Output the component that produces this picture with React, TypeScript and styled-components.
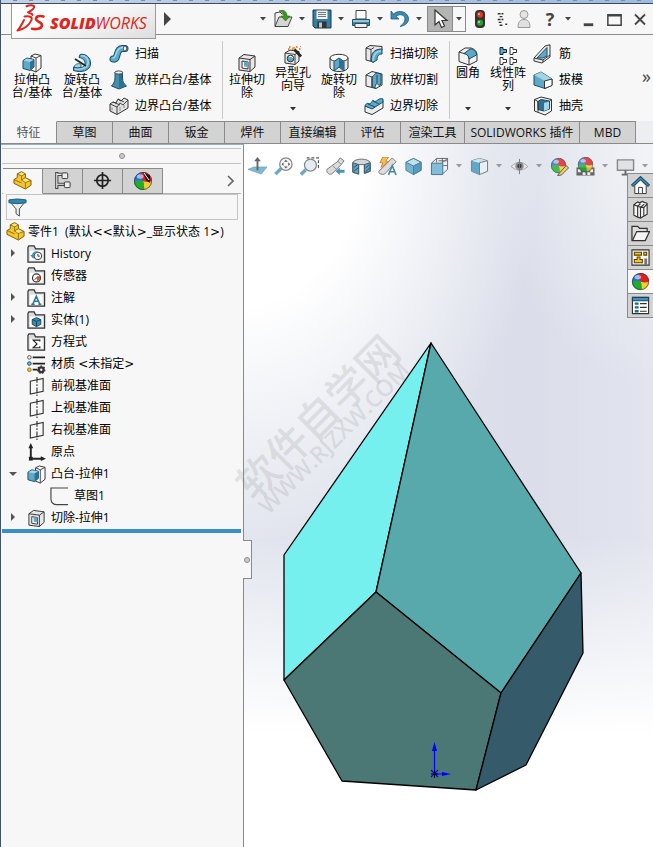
import React from "react";
import styled, { createGlobalStyle, css } from "styled-components";

const GlobalStyle = createGlobalStyle`
  * { box-sizing: border-box; }
  body { margin: 0; background: #f7f7f7; }
  button { font: inherit; color: inherit; background: none; border: 0; padding: 0; margin: 0; cursor: pointer; }
  ul { list-style: none; margin: 0; padding: 0; }
  svg { display: block; flex: none; }
`;

/* ---------- icons ---------- */

const B = "#5fa9c8";
const BL = "#a5d3e6";
const BD = "#2d7294";
const K = "#333";

const Ball = ({ cx = 10, cy = 10, r = 8, soft = false }) => (
  <g opacity={soft ? 0.8 : 1}>
    <g transform={`translate(${cx} ${cy}) scale(${r / 8})`}>
      <circle r="8" fill="#2f6fd8" />
      <path d="M0 0C-1 -3 -2 -6 -1 -7.9A8 8 0 0 1 8 0C5 1.500 2 1 0 0z" fill="#e02020" />
      <path d="M0 0C3 1.500 6 1 8 0A8 8 0 0 1 1 7.900C1 5 1 2 0 0z" fill="#f2cf2c" />
      <path d="M0 0C1 2 1 5 1 7.900A8 8 0 0 1 -8 1C-6 -1 -3 -1 0 0z" fill="#1fae2a" />
      <ellipse cx="-2.500" cy="-4" rx="3" ry="2" fill="#fff" opacity=".55" />
      <circle r="7.600" fill="none" stroke="#333" strokeWidth=".8" opacity=".7" />
    </g>
  </g>
);

const Folder = ({ children }: { children?: React.ReactNode }) => (
  <>
    <path d="M1 18V2.500L2 1H7.500L9 4H18.500V18z" fill="#dcdcdc" stroke={K} strokeWidth="1.300" />
    <path d="M3 6H16.500V16.500H3z" fill="#fdfdfd" />
    {children}
  </>
);

const Part = (
  <>
    <path d="M1 9L4.500 7V3L9 .7L13 3V7L19 10V15L13 19L1 13z" fill="#f5c52c" stroke="#7a5a08" strokeWidth="1" strokeLinejoin="round" />
    <path d="M4.500 3L9 5V9.500L13 12V18.500M9 5L13 3M9 9.500L13 7M13 12L19 10M1 9L9 12.500" fill="none" stroke="#8a670c" strokeWidth=".9" />
    <path d="M6 3L9 1.600L12 3L9 4.500zM10 9.600L13 8L17 10L13 11.500z" fill="#fce68d" />
  </>
);

const Extrude = (
  <>
    <path d="M9 3L13 1L19 2.500V15L14 19L9 17z" fill="#fafafa" stroke={K} />
    <path d="M14 19V5L9 3M14 5L19 2.500" fill="none" stroke={K} strokeWidth=".9" />
    <path d="M1 7.500L5 5L12 6.500V14L8 17.500L1 15.500z" fill={B} stroke="#164f6a" />
    <path d="M1.500 7.500L5 5.500L11.500 6.700L8 9z" fill={BL} />
    <path d="M8 9V17L12 14V6.700z" fill={BD} />
  </>
);

const CutBox = (
  <>
    <path d="M2 5L7 1.500L18 3V14L13 18.500L2 17z" fill="#e8e8e8" stroke={K} />
    <path d="M2 5L13 6.500V18.500M13 6.500L18 3" fill="none" stroke={K} />
    <path d="M5 8L11 9V16L5 15z" fill="#fff" stroke={K} />
    <path d="M7 8.500L11 9V14L7 13.500z" fill={B} />
  </>
);

const Plane = (
  <>
    <path d="M3.500 4.500L17 1.500V15L3.500 18z" fill="none" stroke={K} strokeWidth="1.200" />
    <path d="M10.500 0V20" stroke={K} strokeWidth="1.200" strokeDasharray="6 1.500 2 1.500" />
  </>
);

const ICONS: Record<string, React.ReactNode> = {
  open: (
    <>
      <path d="M2 17V4L7 3L9 5H13V17z" fill="#f0f0f0" stroke="#444" />
      <path d="M2 17.500L6 8H19L15 17.500z" fill="#d5d5d5" stroke="#444" />
      <path d="M6 2C11 0 14 3 14 7H17L12.500 12L8 7H11C11 4 9 3 6 2z" fill="#3b9a1c" stroke="#23650d" strokeWidth=".6" />
    </>
  ),
  save: (
    <>
      <path d="M1 1H19V19H3L1 17z" fill="#357f9f" stroke="#1b3c4c" />
      <path d="M4.500 1.500H15.500V10H4.500z" fill="#f2f2f2" />
      <path d="M6 3.500H14M6 5.500H14M6 7.500H14" stroke="#777" />
      <path d="M5.500 12.500H14.500V19H5.500z" fill="#333" />
      <path d="M7 13.500H10V18.500H7z" fill="#b9c7ce" />
    </>
  ),
  print: (
    <>
      <path d="M5 10V1.500H15V10z" fill="#fff" stroke="#444" />
      <path d="M1.500 10.500H18.500V16.500H1.500z" fill="#378cb1" stroke="#1d536c" />
      <path d="M2 11H18V13H2z" fill="#8ec8df" />
      <path d="M4 14.500H16V18.500H4z" fill="#eee" stroke="#444" />
    </>
  ),
  undo: (
    <path d="M1 2L1 10L9 10L6 7.500C10 4 15 6 15 10C15 13 13 15 10 17.500C16 16.500 19 13 18.500 9C17.500 3 9 0 3.500 5z" fill="#3c8bb0" stroke="#1d5f80" strokeWidth=".8" />
  ),
  cursor: (
    <path d="M5 1V16L9 12.500L11.500 18.500L14.500 17L12 11.500H17z" fill="#fff" stroke="#333" strokeWidth="1.200" />
  ),
  traffic: (
    <>
      <rect x="5" y="1" width="10" height="18" rx="4" fill="#333" />
      <circle cx="10" cy="5.800" r="3" fill="#e23a20" />
      <circle cx="10" cy="13.800" r="3" fill="#2ba32f" />
      <circle cx="9" cy="5" r="1" fill="#ffb09f" />
      <circle cx="9" cy="13" r="1" fill="#a5f0a0" />
    </>
  ),
  options: (
    <path d="M6 4H12M8 7H11M6 10H12M7 13H11M8 16H11M14 15H16" stroke="#333" strokeWidth="1.500" strokeDasharray="3 1" />
  ),
  user: (
    <>
      <circle cx="10" cy="5.500" r="4" fill="#e4e4e4" stroke="#999" />
      <path d="M4 18.500C4 13 6 10.500 10 10.500S16 13 16 18.500z" fill="#e0e0e0" stroke="#999" />
    </>
  ),
  min: <path d="M5 15.500H15" stroke="#444" strokeWidth="3" />,
  max: <path d="M3 5V16H17V5zM3 6H17" fill="none" stroke="#444" strokeWidth="1.600" />,
  close: <path d="M5 5.500L15 15.500M15 5.500L5 15.500" stroke="#444" strokeWidth="1.800" />,
  extrude: Extrude,
  revolve: (
    <>
      <path d="M8 1.500C14 0 19 5 18.500 11C18 18 9 20 1.500 17.500V14C7 15.500 12 15 13 11C13.500 8 11 5 7 4.500z" fill={B} stroke="#164f6a" />
      <path d="M9 3C13 2 17 6 16 10.500C15 15 9 17 3 16" fill="none" stroke={BL} strokeWidth="1.600" />
      <path d="M3 6L14 13" stroke="#222" strokeWidth="1.800" />
      <path d="M2 14C3 11 6 10 9 11L9 14C7 15 4 15 2 14z" fill={BL} stroke="#164f6a" strokeWidth=".8" />
    </>
  ),
  sweep: (
    <>
      <path d="M4 15C10 17 6 5 13 4.500H16" fill="none" stroke="#164f6a" strokeWidth="7" strokeLinecap="round" />
      <path d="M4 15C10 17 6 5 13 4.500H16" fill="none" stroke={B} strokeWidth="5" strokeLinecap="round" />
      <path d="M4 14C8 14 6 4.500 13 3.500H15" fill="none" stroke={BL} strokeWidth="1.500" strokeLinecap="round" />
      <ellipse cx="16" cy="4.500" rx="1.600" ry="2.600" fill="#f4f4f4" stroke="#333" strokeWidth=".8" />
    </>
  ),
  loft: (
    <>
      <path d="M6 2V8C6 12 4 14 2.500 16L10 19L17.500 16C15 14 13.500 12 13.500 8V2z" fill="#4a8dab" stroke="#164f6a" />
      <path d="M10 4V18L17 15.800C15 14 13 12 13 8V3z" fill={BD} />
      <ellipse cx="9.800" cy="2.500" rx="3.800" ry="1.600" fill="#eee" stroke="#333" strokeWidth=".8" />
    </>
  ),
  boundary: (
    <>
      <path d="M1 8L4 6L7 7L9 3L12 5L15 2L19 4V12L8 18.500L1 15z" fill="#e3e3e3" stroke={K} strokeLinejoin="round" />
      <path d="M1 8L8 11V18M8 11L11 7L14 9L19 4M4 6L11 9M9 3L15 6" fill="none" stroke={K} strokeWidth=".9" />
      <path d="M3 11.500V14.500M11 11V15M15 9V12" stroke="#888" />
    </>
  ),
  cut: CutBox,
  hole: (
    <>
      <path d="M2 7L7 4L16 5.500V15L12 18.500L2 17z" fill="#e8e8e8" stroke={K} />
      <path d="M2 7L12 8.500V18.500M12 8.500L16 5.500" fill="none" stroke={K} strokeWidth=".9" />
      <circle cx="7.500" cy="12.500" r="3.300" fill={B} stroke={K} />
      <path d="M6 11A2.500 2.500 0 0 1 10 12" stroke="#fff" fill="none" />
      <path d="M10 2L18 10.500" stroke="#222" strokeWidth="2.600" />
      <path d="M9.500 1.500L11.500 3.500" stroke="#f4a91c" strokeWidth="2.600" />
      <path d="M6 1h1.500M13 1h1.500M16 3h1.500M5 3h1.500M17 0h1" stroke="#e0602a" strokeWidth="1.500" />
    </>
  ),
  cutRevolve: (
    <>
      <path d="M1 5V15C3 18 7 18.500 10 18.500S17 18 19 15V5z" fill="#e6e6e6" stroke={K} />
      <ellipse cx="10" cy="5" rx="9" ry="3.700" fill="#fafafa" stroke={K} />
      <path d="M5 8.500L10 5L15 8.500V18L10 14L5 18z" fill={B} stroke="#164f6a" />
      <path d="M10 5L15 8.500V18L10 14z" fill={BD} />
    </>
  ),
  cutSweep: (
    <>
      <path d="M2 4L6 1.500L18 2.500V6C11 6 10 12 9.500 18L2 16z" fill="#e8e8e8" stroke={K} />
      <path d="M7 17C7 9 10 5 18 5V10C14 10 13 13 13 16L9 18.500z" fill={B} stroke="#164f6a" />
      <path d="M9 17C9 10 13 7 17 7" fill="none" stroke={BL} strokeWidth="1.500" />
      <path d="M2 4L7 5.500V17M7 5.500L10 3.500" fill="none" stroke={K} strokeWidth=".9" />
    </>
  ),
  cutLoft: (
    <>
      <path d="M2 5L8 1.500L18 4V15L12 18.500L2 16z" fill="#ececec" stroke={K} />
      <path d="M8 7C11 5 11 3 13 3L17 4V14L15 15.500C13 12 11 14 11 18L8 17z" fill={B} stroke="#164f6a" />
      <path d="M2 5L8 7V17M13 5V13" fill="none" stroke={K} strokeWidth=".9" />
    </>
  ),
  cutBoundary: (
    <>
      <path d="M1 10L8 12L19 5V12L8 18.500L1 16z" fill="#eee" stroke={K} />
      <path d="M1 10C3 5 5 9 7 7S8 3 10 5S15 1 19 3V6L8 13z" fill={B} stroke="#164f6a" />
      <path d="M4 8L11 11M9 5L15 8" stroke="#164f6a" />
    </>
  ),
  fillet: (
    <>
      <path d="M1 6L7 2L13 2C17 3 19 6 19 9V15L11 19L1 15.500z" fill="#f2f2f2" stroke={K} />
      <path d="M1 6L6 7.500C10 8 11 11 11 13V19" fill="none" stroke={K} />
      <path d="M6 7.500L12 3C16 3 18.500 6 18.500 9L11 13C11 10 9 8 6 7.500z" fill={B} stroke="#164f6a" />
    </>
  ),
  pattern: (
    <>
      <path d="M2 1.500H5V3.500H8.500V6.500H5V8.500H2z" fill={B} stroke="#123" />
      <path d="M12 1.500H15V3.500H18.500V6.500H15V8.500H12zM2 11.500H5V13.500H8.500V16.500H5V18.500H2zM12 11.500H15V13.500H18.500V16.500H15V18.500H12z" fill="#fff" stroke="#333" />
    </>
  ),
  rib: (
    <>
      <path d="M1 14L12 2L17 .8V13L9 19L1 17z" fill="#eee" stroke={K} />
      <path d="M4 14L14 3.500V12L10 14z" fill={B} stroke="#164f6a" />
      <path d="M1 14L10 16L17 11M10 16V18" fill="none" stroke={K} />
    </>
  ),
  draft: (
    <>
      <path d="M1 5L8 2L19 9V15L12 18.500L1 15z" fill={B} stroke="#164f6a" />
      <path d="M1 5L8 2L19 9L12 11z" fill={BL} />
      <path d="M11.500 11L19 9V15.500L11.500 18.500z" fill="#fff" stroke={K} />
    </>
  ),
  shell: (
    <>
      <path d="M1.500 3.500L8 1L18.500 3.500V15L12 19L1.500 15z" fill="#f2f2f2" stroke={K} />
      <path d="M5 5.500L8 3.500L16.500 5V13L11 15L5 13.500z" fill={BD} stroke="#164f6a" />
      <path d="M11 7L16 5.500V13L11 15z" fill={BL} />
      <path d="M1.500 3.500L5 5.500V15.800M18.500 3.500L16.500 5" fill="none" stroke={K} />
    </>
  ),
  part: Part,
  config: (
    <>
      <path d="M4 1V19M4 3.500H10M4 14H12" fill="none" stroke="#444" strokeWidth="3.400" />
      <path d="M4 2V18M4 3.500H10M4 14H12" fill="none" stroke="#eee" strokeWidth="1.200" />
      <rect x="9.500" y="2" width="6" height="6" rx="1" fill="#eee" stroke="#333" />
      <rect x="12" y="11.500" width="6" height="6" rx="1" fill="#eee" stroke="#333" />
    </>
  ),
  target: (
    <>
      <circle cx="10" cy="10" r="6" fill="none" stroke="#222" strokeWidth="1.800" />
      <path d="M10 1V19M1 10H19" stroke="#222" strokeWidth="1.800" />
    </>
  ),
  ball: <Ball r={9} />,
  display: (
    <>
      <Ball r={9} />
      <path d="M10 1.500L17 4.500V12L13 9z" fill="#201010" />
      <path d="M11 2L16 9" stroke="#fff" strokeWidth="1" />
    </>
  ),
  filter: (
    <>
      <path d="M2 4H18L12 11.500V19L8.500 16.500V11.500z" fill="#eee" stroke="#444" />
      <path d="M1 2Q10 0 19 2V5Q10 7 1 5z" fill="#2e88ad" stroke="#1a5e7c" />
    </>
  ),
  history: (
    <Folder>
      <circle cx="11.500" cy="11.500" r="4" fill="#fff" stroke="#333" />
      <path d="M11.500 9.500V11.800H13.500" fill="none" stroke="#333" />
      <path d="M3.500 10.500H9L6.500 14.500z" fill="#3b89ad" />
      <path d="M6 11.500C6 8 9 7 11 7.500" fill="none" stroke="#3b89ad" strokeWidth="1.600" />
    </Folder>
  ),
  sensor: (
    <Folder>
      <circle cx="10" cy="11.500" r="4.200" fill="#fff" stroke="#333" strokeWidth="1.300" />
      <path d="M10 11.500L14 9V13L11 15z" fill="#e4502e" />
      <path d="M8 13.500L12 9.500" stroke="#333" />
    </Folder>
  ),
  note: (
    <Folder>
      <path d="M6 16L9.800 7.500L13.500 16M7.500 13H12M4.500 16H8M12 16H15" fill="none" stroke="#2a7a9e" strokeWidth="1.600" />
    </Folder>
  ),
  solid: (
    <Folder>
      <path d="M5.500 9L10 7L14.500 9V14L10 16.500L5.500 14z" fill="#388bb0" stroke="#15465c" />
      <path d="M5.500 9L10 11L14.500 9M10 11V16" fill="none" stroke="#15465c" />
    </Folder>
  ),
  equation: (
    <Folder>
      <path d="M13.500 9V7.500H6.500L10.500 11.500L6.500 15.500H13.500V14" fill="none" stroke="#222" strokeWidth="1.200" />
    </Folder>
  ),
  material: (
    <>
      <path d="M6 2.500H19M6 9H19M6 15.500H11" stroke="#222" strokeWidth="1.800" />
      <circle cx="2.500" cy="2.500" r="1.900" fill="#eee" stroke="#555" />
      <circle cx="2.500" cy="9" r="1.900" fill="#5cc0e8" stroke="#246" />
      <circle cx="2.500" cy="15.500" r="1.900" fill="#f7c600" stroke="#963" />
      <circle cx="15" cy="15.500" r="2.500" fill="none" stroke="#333" strokeWidth="2.500" />
      <circle cx="15" cy="15.500" r="3.900" fill="none" stroke="#333" strokeWidth="1.200" strokeDasharray="1.700 1.700" />
    </>
  ),
  plane: Plane,
  origin: (
    <>
      <path d="M4 4V16.500H16" fill="none" stroke="#222" strokeWidth="2" />
      <path d="M1.500 5.500L4 0L6.500 5.500zM14.500 14L20 16.500L14.500 19z" fill="#222" />
      <rect x="2" y="14.500" width="4" height="4" fill="#222" />
    </>
  ),
  sketch: <path d="M19 1H1V13C1 16.500 4 18.500 7 18.500H19" fill="none" stroke="#444" strokeWidth="1.200" />,
  normal: (
    <>
      <path d="M0 13L6 10.500H20L14 18z" fill="#7fb9d4" stroke="#5f94ad" strokeWidth=".6" />
      <path d="M10 14V3" stroke="#666" strokeWidth="2" />
      <path d="M6.500 4.500L10 0L13.500 4.500z" fill="#666" />
    </>
  ),
  zoomFit: (
    <>
      <path d="M1.500 18L8 11.500" stroke="#6fa8c4" strokeWidth="3.600" />
      <circle cx="12.500" cy="7.500" r="6.500" fill="#f4f6f8" stroke="#888" strokeWidth="1.300" />
      <path d="M10.500 5L12.500 3L14.500 5zM10.500 10L12.500 12L14.500 10zM10 5.500L8 7.500L10 9.500zM15 5.500L17 7.500L15 9.500z" fill="#555" />
    </>
  ),
  zoomArea: (
    <>
      <path d="M7 1H19.500V13" fill="none" stroke="#555" strokeWidth="1.300" strokeDasharray="3 2" />
      <path d="M1 18.500L6 13.500" stroke="#6fa8c4" strokeWidth="3.600" />
      <circle cx="11" cy="8.500" r="6.300" fill="#e3e9ef" fillOpacity=".9" stroke="#888" strokeWidth="1.300" />
    </>
  ),
  prevView: (
    <>
      <path d="M1 13L12 5L15 1L19 4L16 8L6 18C3 19 0 16 1 13z" fill="#dcdcdc" stroke="#777" />
      <path d="M7 9L11 13M12 4L16 8" stroke="#888" />
      <path d="M10 15L14.500 11V13.500H19.500V16.500H14.500V19z" fill="#4c93b5" />
    </>
  ),
  section: (
    <>
      <path d="M.7 6C3 1 17 1 19.300 6V15L13 17.500V8H7V18L.7 16z" fill="#d4d7da" stroke="#666" />
      <path d="M1 6L7 8V18L1 16zM13 8L19 6V15L13 17z" fill="#62a3c2" stroke="#3a5f70" />
      <path d="M2 11L6 8M2 15L7 11M14 12L18 8M14 16L19 11" stroke="#244f63" />
    </>
  ),
  dynView: (
    <>
      <path d="M1 15L10 6L15 1L19 5L7 18C3 19 0 17 1 15z" fill="#dcdcdc" stroke="#777" />
      <path d="M5 0H11L8 5H11L3 11L5 6H2z" fill="#f6c14d" stroke="#c8702c" strokeWidth=".8" />
      <path d="M11 19L15 9L19 19M12.500 15.500H17.500" fill="none" stroke="#4286a8" strokeWidth="1.700" />
    </>
  ),
  cube: (
    <>
      <path d="M10 1.500L18 5.500V14L10 18.500L2 14V5.500z" fill="#76b5d0" stroke="#4d8299" />
      <path d="M2 5.500L10 1.500L18 5.500L10 9.500z" fill="#c0e0ee" stroke="#4d8299" />
      <path d="M10 9.500L18 5.500V14L10 18.500z" fill="#579cba" stroke="#4d8299" />
    </>
  ),
  orient: (
    <>
      <path d="M7 1.500H18.500V13L13 18H2V6zM7 1.500V6M18.500 1.500L13 6M13 1V13M9 4H18M14 9H18" fill="none" stroke="#666" />
      <path d="M1.500 6.500H13.500V18.500H1.500z" fill="#86bdd6" stroke="#3f7a95" />
    </>
  ),
  style: (
    <>
      <path d="M1.500 4L10 1.500L18.500 4V15L10 18.500L1.500 15z" fill="#eceff2" stroke="#777" />
      <path d="M2 4L10 6V18.500L2 15z" fill="#62a7c6" />
      <path d="M10 1.500L18 4L10 6L2 4z" fill="#cbe3ee" />
      <path d="M10 6V18.500M10 6L18 4" stroke="#777" />
    </>
  ),
  eye: (
    <>
      <path d="M1 10Q10 1 19 10Q10 18 1 10z" fill="#e8e8ec" stroke="#a8a8ac" />
      <circle cx="10" cy="9.500" r="4.500" fill="#8d8f94" />
      <circle cx="10" cy="9.500" r="2.300" fill="#3a3a3e" />
      <path d="M10 2V18" stroke="#777" />
    </>
  ),
  appearance: (
    <>
      <Ball cx={9} cy={9} soft />
      <path d="M9 18L17 9L19.500 11.500L12 19L8 19.500z" fill="#f3cf69" stroke="#555" />
    </>
  ),
  scene: (
    <>
      <path d="M.5 11H19.500V19.500H.5z" fill="#666" />
      <path d="M2 13h3v3H2zM7 16h3v3H7zM15 13h3v3h-3zM12 16h3v3h-3z" fill="#eee" />
      <Ball cx={10} cy={8} soft />
    </>
  ),
  monitor: (
    <>
      <path d="M1.500 3H18.500V14H1.500z" fill="#e0e2e6" stroke="#888" strokeWidth="1.500" />
      <path d="M10 14V18M6 18.500H14" stroke="#666" strokeWidth="2" />
    </>
  ),
  home: (
    <>
      <path d="M4 10L10 4L16 10V18.500H4z" fill="#fff" stroke={K} />
      <path d="M8 18V12H12V18" fill="#fff" stroke={K} />
      <path d="M1 10.500L10 2L19 10.500" fill="none" stroke="#15425a" strokeWidth="3.200" />
      <path d="M1.500 10L10 2.300L18.500 10" fill="none" stroke="#3f93ba" strokeWidth="1.300" />
    </>
  ),
  books: (
    <path d="M3 5L7 2L9 3L12 1.500L14 2.500L17 3.500V15L10 19L7 18L3 16zM3 5L7 6.500V18M7 6.500L10 4M7 6.500L10 7.500V19M10 7.500L14 4.500M10 7.500L13.500 8V17M13.500 8L17 4" fill="#f5f5f5" stroke={K} strokeWidth="1.200" />
  ),
  explorer: (
    <>
      <path d="M1 17.500V2.500H7L9 4.500H17V8" fill="#ddd" stroke={K} strokeWidth="1.300" />
      <path d="M1.500 17.500L6 8H19.500L15 17.500z" fill="#f5f5f5" stroke={K} strokeWidth="1.300" />
    </>
  ),
  palette: (
    <>
      <path d="M1 2H19V18H1z" fill="#f8f8f8" stroke={K} strokeWidth="1.200" />
      <path d="M3.500 4.500H11V7.500H3.500zM13.500 4.500H16.500V7.500H13.500zM6.500 9.500H9.500V12H12V15.500H3.500V12H6.500z" fill="#f7c520" stroke="#5a4300" strokeWidth="1.100" />
      <path d="M15.500 11V18" stroke="#777" strokeWidth="3" />
    </>
  ),
  props: (
    <>
      <path d="M1.500 1.500H18.500V18.500H1.500z" fill="#fff" stroke={K} strokeWidth="1.200" />
      <path d="M1.500 1.500H18.500V5H1.500z" fill="#3f93ba" stroke="#173f52" />
      <path d="M4 8H8M4 12H8M4 16H8" stroke="#1d6a90" strokeWidth="2.500" />
      <path d="M9.500 8H16.500M9.500 12H16.500M9.500 16H16.500" stroke="#333" strokeWidth="1.200" />
    </>
  ),
};

const Icon = ({ name, size = 19 }: { name: string; size?: number }) => (
  <svg width={size} height={size} viewBox="0 0 20 20" aria-hidden="true">
    {ICONS[name]}
  </svg>
);

const Caret = () => (
  <svg width="6" height="4" viewBox="0 0 6 4" aria-hidden="true">
    <path d="M0 0H6L3 3.500z" fill="currentColor" />
  </svg>
);

/* ---------- shell ---------- */

const Shell = styled.div`
  display: flex;
  flex-direction: column;
  min-height: 100vh;
  border-left: 1px solid #43536b;
  background: #f7f7f7;
  color: #000;
  font: 12px/16px "Open Sans", "Noto Sans CJK SC", sans-serif;
`;

const WindowEdge = styled.div`
  height: 4px;
  background:
    repeating-linear-gradient(90deg, transparent 0 12px, #7c8ca6 12px 16px) 0 0 / 100% 1px no-repeat,
    linear-gradient(90deg, #c3d3e6, #9ebbe0);
  border-bottom: 1px solid #40485a;
`;

const TitleBar = styled.header`
  display: flex;
  align-items: center;
  height: 31px;
  padding-left: 10px;
  border-bottom: 1px solid #8b8b8b;
`;

const Brand = styled.div`
  display: flex;
  align-items: flex-start;
  align-self: flex-start;
  gap: 4px;
  width: 145px;
  height: 35px;
  padding: 0 4px;
  border: 1px solid #9a9a9a;
  border-top: 0;
  background: linear-gradient(160deg, #fff 30%, #dedede);
  color: #d8281f;
  font: italic 400 16px/20px "Open Sans", sans-serif;
  z-index: 1;
`;

const BrandName = styled.span`
  padding-top: 9px;
`;

const BrandBold = styled.b`
  font-weight: 800;
`;

const MenuArrow = styled.button`
  margin-left: 8px;
`;

const QuickBar = styled.div`
  display: flex;
  align-items: center;
  margin-left: auto;
  color: #444;
`;

const Slot = styled.button<{ $w: number }>`
  display: flex;
  flex: none;
  align-items: center;
  justify-content: center;
  width: ${(p) => p.$w}px;
  height: 26px;
`;

const SelectTool = styled.div`
  display: flex;
  align-items: center;
  margin: 0 2px;
  border: 1px solid #8a8a8a;

  > button {
    height: 24px;
  }

  > button:first-child {
    background: #b4b4b4;
    border-right: 1px solid #8a8a8a;
  }
`;

const Help = styled.span`
  font: 700 18px/20px "Open Sans", sans-serif;
`;

/* ---------- ribbon ---------- */

const Ribbon = styled.div`
  display: flex;
  height: 86px;
  padding: 6px 2px 2px 6px;
`;

const Divider = styled.div`
  width: 1px;
  margin-right: 1px;
  background: #c8c8c8;
`;

const BigTool = styled.button<{ $w: number; $high?: boolean }>`
  display: flex;
  flex: none;
  flex-direction: column;
  align-items: center;
  width: ${(p) => p.$w}px;
  padding-top: ${(p) => (p.$high ? 5 : 12)}px;
  line-height: 13px;
  text-align: center;

  > span { white-space: pre-line; }
  > i { display: flex; margin-top: auto; padding-bottom: 8px; color: #333; }
`;

const ToolList = styled.div<{ $w: number }>`
  display: flex;
  flex: none;
  flex-direction: column;
  width: ${(p) => p.$w}px;
  padding-left: 2px;
`;

const SmallTool = styled.button`
  display: flex;
  align-items: center;
  gap: 6px;
  height: 26px;
  white-space: nowrap;
`;

const More = styled.button`
  margin-left: auto;
  padding-bottom: 8px;
  font-size: 18px;
  color: #444;
`;

const Tabs = styled.nav`
  display: flex;
  height: 23px;
  background: #eceef2;
  border-bottom: 1px solid #8a8a8a;
`;

const Tab = styled.button<{ $w: number; $on?: boolean }>`
  flex: none;
  width: ${(p) => p.$w}px;
  border: solid #8a8a8a;
  border-width: 1px 1px 0 0;
  background: #d3d3d3;
  color: #111;
  ${(p) =>
    p.$on &&
    css`
      border-top-color: #f7f7f7;
      background: #f7f7f7;
      color: #555;
    `}
`;

/* ---------- feature manager ---------- */

const Body = styled.main`
  display: flex;
  flex: 1;
`;

const Side = styled.aside`
  position: relative;
  flex: none;
  width: 243px;
  padding: 0 2px 0 1px;
  border-right: 1px solid #8a8a8a;
  border-top: 1px solid #8fb4bc;
`;

const Grip = styled.div`
  display: flex;
  align-items: center;
  justify-content: center;
  height: 16px;
  margin-top: 3px;
  border: solid #c4c4c4;
  border-width: 1px 0;
`;

const Dot = styled.span`
  width: 6px;
  height: 6px;
  border: 1px solid #8c8c8c;
  border-radius: 50%;
  background: #ccc;
`;

const PanelTabs = styled.div`
  display: flex;
  align-items: center;
  height: 26px;
  margin-top: 4px;
  padding-left: 1px;
  border-bottom: 1px solid #b4b4b4;
`;

const PanelTab = styled.button<{ $on?: boolean }>`
  display: flex;
  align-items: center;
  justify-content: center;
  width: 40px;
  height: 26px;
  border: 1px solid #8a8a8a;
  border-left: 0;
  background: #d3d3d3;
  ${(p) =>
    p.$on &&
    css`
      background: #f7f7f7;
      border-bottom-color: #f7f7f7;
    `}
`;

const PanelMore = styled.button`
  margin: 0 7px 0 auto;
  color: #666;
`;

const FilterBox = styled.label`
  display: flex;
  align-items: center;
  height: 26px;
  margin: 0 3px 0 4px;
  padding-left: 1px;
  border: 1px solid #c4c4c4;

  input {
    flex: 1;
    min-width: 0;
    border: 0;
    outline: 0;
    background: none;
    font: inherit;
  }
`;

const Root = styled.div`
  display: flex;
  align-items: center;
  gap: 3px;
  height: 23px;
  padding-left: 4px;
  white-space: pre;
`;

const TreeRow = styled.li<{ $child?: boolean }>`
  display: flex;
  align-items: center;
  height: 22px;
  gap: 5px;
  padding-left: ${(p) => (p.$child ? 25 : 2)}px;
  white-space: pre;
`;

const Toggle = styled.button`
  display: flex;
  justify-content: center;
  width: 18px;
  height: 10px;
  color: #555;
`;

const Angle = styled.span`
  font-family: "DejaVu Sans", sans-serif;
`;

const Rollback = styled.div`
  height: 4px;
  background: #3a8fc8;
`;

const SideHandle = styled.button`
  position: absolute;
  top: 395px;
  right: -9px;
  z-index: 2;
  display: flex;
  align-items: center;
  justify-content: center;
  width: 9px;
  height: 39px;
  border: 1px solid #8a8a8a;
  border-left: 0;
  background: #f7f7f7;
`;

/* ---------- graphics area ---------- */

const Viewport = styled.section`
  position: relative;
  flex: 1;
  min-width: 0;
  background:
    linear-gradient(180deg, rgba(255, 255, 255, 0) 56%, #fff 84%),
    radial-gradient(ellipse 300px 400px at 0 0, #fff 40%, rgba(255, 255, 255, 0) 100%),
    radial-gradient(ellipse 160px 240px at 100% 0, rgba(244, 245, 248, 0.9), rgba(244, 245, 248, 0) 100%),
    linear-gradient(90deg, #e2e5ee, #dbdeea 70%, #e2e5ee);
`;

const Scene = styled.svg`
  position: absolute;
  inset: 0;
  width: 100%;
  height: 100%;
  overflow: visible;
`;

const HeadsUp = styled.div`
  position: relative;
  display: flex;
  align-items: center;
  height: 26px;
  margin-top: 9px;
  overflow: hidden;
  color: #999;
`;

const TaskPane = styled.div`
  position: absolute;
  top: 29px;
  right: 0;
  display: flex;
  flex-direction: column;
  width: 26px;
  border: 1px solid #8a8a8a;
  border-width: 1px 0 0 1px;
`;

const TaskButton = styled.button<{ $on?: boolean }>`
  display: flex;
  align-items: center;
  justify-content: center;
  height: 24px;
  border-bottom: 1px solid #8a8a8a;
  background: ${(p) => (p.$on ? "#f7f7f7" : "#d3d3d3")};
`;

/* ---------- data ---------- */

const tabs: [string, number][] = [
  ["特征", 56], ["草图", 56], ["曲面", 56], ["钣金", 56], ["焊件", 56], ["直接编辑", 64],
  ["评估", 56], ["渲染工具", 64], ["SOLIDWORKS 插件", 115], ["MBD", 56],
];

const tree: { icon: string; text: string; state?: "open" | "closed"; child?: boolean }[] = [
  { icon: "history", text: "History", state: "closed" },
  { icon: "sensor", text: "传感器" },
  { icon: "note", text: "注解", state: "closed" },
  { icon: "solid", text: "实体(1)", state: "closed" },
  { icon: "equation", text: "方程式" },
  { icon: "material", text: "材质 <未指定>" },
  { icon: "plane", text: "前视基准面" },
  { icon: "plane", text: "上视基准面" },
  { icon: "plane", text: "右视基准面" },
  { icon: "origin", text: "原点" },
  { icon: "extrude", text: "凸台-拉伸1", state: "open" },
  { icon: "sketch", text: "草图1", child: true },
  { icon: "cut", text: "切除-拉伸1", state: "closed" },
];

const headsUp = [
  "normal", "zoomFit", "zoomArea", "prevView", "section", "dynView", "cube", "orient", "",
  "style", "", "eye", "", "appearance", "scene", "", "monitor", "",
];

const taskPane = ["home", "books", "explorer", "palette", "ball", "props"];

/* ---------- pieces ---------- */

const Big = ({ icon, text, w, menu, high }: { icon: string; text: string; w: number; menu?: boolean; high?: boolean }) => (
  <BigTool $w={w} $high={high}>
    <Icon name={icon} size={20} />
    <span>{text}</span>
    {menu && <i><Caret /></i>}
  </BigTool>
);

const List = ({ w, items }: { w: number; items: [string, string][] }) => (
  <ToolList $w={w}>
    {items.map(([icon, text]) => (
      <SmallTool key={icon}>
        <Icon name={icon} size={20} />
        {text}
      </SmallTool>
    ))}
  </ToolList>
);

const Label = ({ text }: { text: string }) => (
  <span>
    {text.split(/([<>]+)/).map((part, i) => (i % 2 ? <Angle key={i}>{part}</Angle> : part))}
  </span>
);

const DropSlot = () => (
  <Slot $w={12} aria-label="更多选项"><Caret /></Slot>
);

export default function App() {
  return (
    <Shell>
      <GlobalStyle />
      <WindowEdge />
      <TitleBar>
        <Brand>
          <svg width="30" height="30" viewBox="0 0 30 30" aria-hidden="true">
            <g fill="none" stroke="#d8281f" strokeWidth="2" strokeLinecap="round" strokeLinejoin="round">
              <path d="M10.500 2.200C13 1.200 18 .8 18.200 2.600C18.400 4.500 15 6.800 12 8.400C14 8.600 16 9.500 16.500 11" />
              <path d="M8.500 12.500C14 11.500 16.500 13 15.500 16C13.500 21 8 25.500 1.500 26.500C4 24 6 20 8 16" />
              <path d="M27.500 12.500C23.500 11.500 20 12 20 15C20 18 26.500 18 26 21.500C25.500 25 20 25.500 16 24.800" strokeWidth="2.600" />
            </g>
          </svg>
          <BrandName><BrandBold>SOLID</BrandBold>WORKS</BrandName>
        </Brand>
        <MenuArrow aria-label="菜单">
          <svg width="7" height="14" viewBox="0 0 7 14"><path d="M0 0L7 7L0 14z" fill="#444" /></svg>
        </MenuArrow>
        <QuickBar>
          <DropSlot />
          {["open", "save", "print", "undo"].map((n) => (
            <React.Fragment key={n}>
              <Slot $w={27} aria-label={n}><Icon name={n} size={20} /></Slot>
              <DropSlot />
            </React.Fragment>
          ))}
          <SelectTool>
            <Slot $w={25} aria-label="select"><Icon name="cursor" size={20} /></Slot>
            <Slot $w={12} aria-label="select options"><Caret /></Slot>
          </SelectTool>
          <Slot $w={24} aria-label="rebuild"><Icon name="traffic" size={20} /></Slot>
          <Slot $w={18} aria-label="options"><Icon name="options" /></Slot>
          <Slot $w={28} aria-label="user"><Icon name="user" size={20} /></Slot>
          <Slot $w={24} aria-label="help"><Help>?</Help></Slot>
          <DropSlot />
          <Slot $w={28} aria-label="minimize"><Icon name="min" /></Slot>
          <Slot $w={25} aria-label="maximize"><Icon name="max" /></Slot>
          <Slot $w={26} aria-label="close"><Icon name="close" size={20} /></Slot>
        </QuickBar>
      </TitleBar>

      <Ribbon>
        <Big icon="extrude" text={"拉伸凸\n台/基体"} w={50} />
        <Big icon="revolve" text={"旋转凸\n台/基体"} w={50} />
        <List w={115} items={[["sweep", "扫描"], ["loft", "放样凸台/基体"], ["boundary", "边界凸台/基体"]]} />
        <Divider />
        <Big icon="cut" text={"拉伸切\n除"} w={46} />
        <Big icon="hole" text={"异型孔\n向导"} w={46} menu high />
        <Big icon="cutRevolve" text={"旋转切\n除"} w={46} />
        <List w={87} items={[["cutSweep", "扫描切除"], ["cutLoft", "放样切割"], ["cutBoundary", "边界切除"]]} />
        <Divider />
        <Big icon="fillet" text="圆角" w={34} menu high />
        <Big icon="pattern" text={"线性阵\n列"} w={46} menu high />
        <List w={80} items={[["rib", "筋"], ["draft", "拔模"], ["shell", "抽壳"]]} />
        <More aria-label="更多">»</More>
      </Ribbon>

      <Tabs>
        {tabs.map(([label, w], i) => (
          <Tab key={label} $w={w} $on={i === 0}>{label}</Tab>
        ))}
      </Tabs>

      <Body>
        <Side>
          <Grip><Dot /></Grip>
          <PanelTabs>
            <PanelTab $on aria-label="设计树"><Icon name="part" /></PanelTab>
            <PanelTab aria-label="属性"><Icon name="config" /></PanelTab>
            <PanelTab aria-label="尺寸"><Icon name="target" /></PanelTab>
            <PanelTab aria-label="外观"><Icon name="display" size={20} /></PanelTab>
            <PanelMore aria-label="展开">
              <svg width="7" height="12" viewBox="0 0 7 12"><path d="M1 1L6 6L1 11" fill="none" stroke="#666" strokeWidth="1.600" /></svg>
            </PanelMore>
          </PanelTabs>
          <FilterBox>
            <Icon name="filter" />
            <input aria-label="过滤器" />
          </FilterBox>
          <Root>
            <Icon name="part" />
            <Label text="零件1  (默认<<默认>_显示状态 1>)" />
          </Root>
          <ul>
            {tree.map((row) => (
              <TreeRow key={row.text} $child={row.child}>
                {row.state ? (
                  <Toggle aria-label={row.text}>
                    {row.state === "open" ? (
                      <svg width="8" height="9" viewBox="0 0 8 9"><path d="M0 3H8L4 7z" fill="#555" /></svg>
                    ) : (
                      <svg width="8" height="9" viewBox="0 0 8 9"><path d="M2 0L6 4L2 8z" fill="#555" /></svg>
                    )}
                  </Toggle>
                ) : (
                  <Toggle as="span" />
                )}
                <Icon name={row.icon} />
                <Label text={row.text} />
              </TreeRow>
            ))}
          </ul>
          <Rollback />
          <SideHandle aria-label="折叠面板"><Dot /></SideHandle>
        </Side>

        <Viewport>
          <Scene viewBox="244 144 409 703" preserveAspectRatio="xMinYMin meet" role="img" aria-label="零件模型">
            <g transform="translate(258 478) rotate(-45)" fill="#888" fillOpacity=".2">
              <text x="-20" y="15" fontSize="42" fontWeight="500" fontFamily="Noto Sans CJK SC, sans-serif">软件自学网</text>
              <text x="-19" y="34" fontSize="23" fontWeight="600" fontFamily="Open Sans, sans-serif">WWW.RJZXW.COM</text>
            </g>
            <g stroke="#000" strokeWidth="1.300" strokeLinejoin="round">
              <path d="M431 343L284 555V680L376 592z" fill="#76f0ee" />
              <path d="M431 343L581 573L501 693L376 592z" fill="#58a9ac" />
              <path d="M376 592L501 693L476 790L342 781L284 680z" fill="#4b7875" />
              <path d="M581 573L583 653L526 765L476 790L501 693z" fill="#355a69" />
            </g>
            <g stroke="#00f" fill="#00f">
              <path d="M434.500 774V750M434 774H445M431 770L438 777M438 770L431 777" strokeWidth="1.200" />
              <path d="M434.500 742L437 751H432zM451 774L442 772V776z" stroke="none" />
              <path d="M431 774H438M434.500 770V778" stroke="#002" />
            </g>
          </Scene>
          <HeadsUp>
            {headsUp.map((n, i) => (
              <Slot key={i} $w={n ? 26 : 14} aria-label={n || "下拉"}>
                {n ? <Icon name={n} /> : <Caret />}
              </Slot>
            ))}
          </HeadsUp>
          <TaskPane>
            {taskPane.map((n) => (
              <TaskButton key={n} $on={n === "ball"} aria-label={n}><Icon name={n} /></TaskButton>
            ))}
          </TaskPane>
        </Viewport>
      </Body>
    </Shell>
  );
}
